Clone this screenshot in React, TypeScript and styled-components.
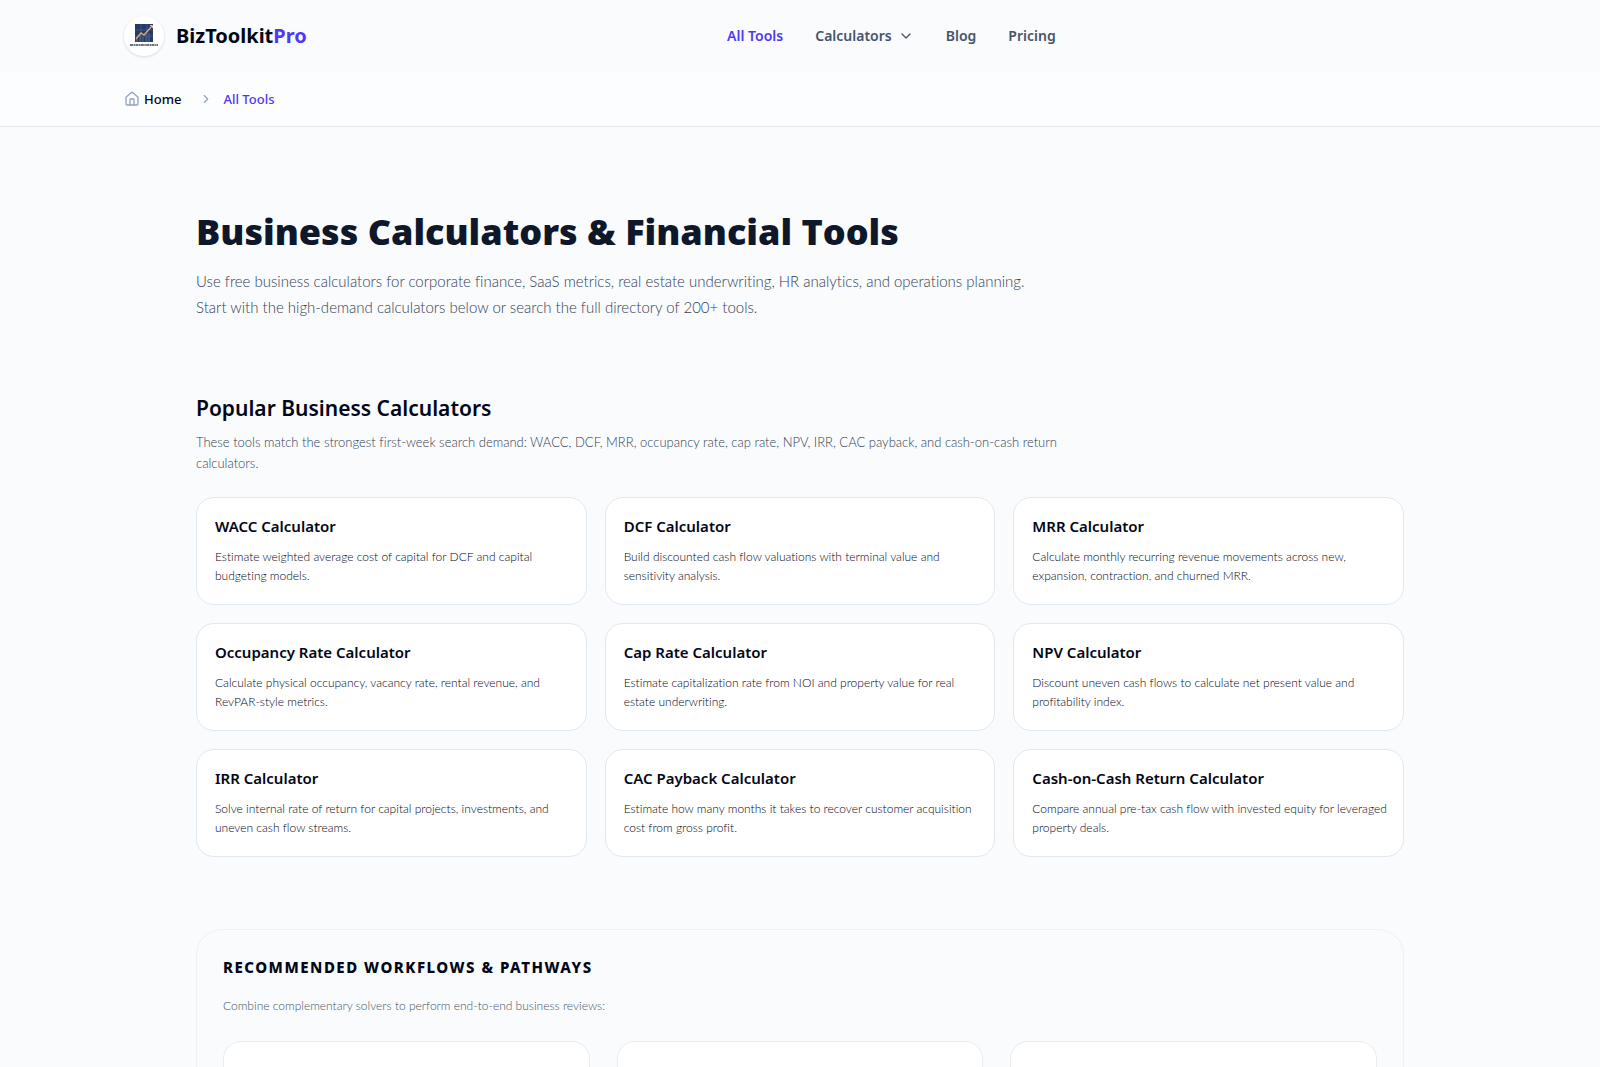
import React from "react";
import styled, { createGlobalStyle } from "styled-components";
import { ChevronDown, ChevronRight, House } from "lucide-react";

const heading = '"Noto Sans", "Open Sans", sans-serif';
const display = '"Open Sans", "Noto Sans", sans-serif';
const copy = 'Lato, "Open Sans", sans-serif';

const color = {
  page: "#f9fbfd",
  ink: "#0f172a",
  title: "#020617",
  text: "#334155",
  muted: "#475569",
  icon: "#94a3b8",
  line: "#e2e8f0",
  brand: "#4f39f6",
};

const GlobalStyle = createGlobalStyle`
  *, *::before, *::after { box-sizing: border-box; }
  body {
    margin: 0;
    background: ${color.page};
    color: ${color.ink};
    font-family: ${heading};
  }
  h1, h2, h3, p, ol { margin: 0; padding: 0; }
  a { color: inherit; text-decoration: none; }
`;

const Shell = styled.div`
  width: 100%;
  max-width: 1400px;
  margin: 0 auto;
  padding: 0 24px;
  display: flex;
  align-items: center;
`;

const Header = styled.header`
  background: ${color.page};

  ${Shell} {
    min-height: 72px;
  }
`;

const Brand = styled.a`
  display: flex;
  align-items: center;
  gap: 12px;
  font-size: 20px;
  line-height: 28px;
  font-weight: 700;
  color: ${color.title};
`;

const BrandAccent = styled.span`
  color: ${color.brand};
`;

const LogoDisc = styled.span`
  display: grid;
  place-items: center;
  width: 40px;
  height: 40px;
  border-radius: 50%;
  background: #fff;
  box-shadow: 0 1px 3px rgba(15, 23, 42, 0.14);
`;

const Nav = styled.nav`
  margin: 0 auto;
  display: flex;
  align-items: center;
  gap: 32px;
`;

const NavLink = styled.a<{ $active?: boolean }>`
  font-size: 14px;
  line-height: 20px;
  font-weight: 600;
  color: ${(p) => (p.$active ? color.brand : color.muted)};
`;

const NavButton = styled.button`
  display: flex;
  align-items: center;
  gap: 6px;
  padding: 0;
  border: 0;
  background: none;
  font: 600 14px/20px ${heading};
  color: ${color.muted};
  cursor: pointer;
`;

const CrumbBar = styled.nav`
  background: #fcfdfe;
  border-bottom: 1px solid ${color.line};

  ${Shell} {
    min-height: 54px;
  }
`;

const Crumbs = styled.ol`
  display: flex;
  align-items: center;
  gap: 12px;
  list-style: none;
  font-size: 13px;
  line-height: 20px;
  font-weight: 500;
`;

const Crumb = styled.li<{ $current?: boolean }>`
  display: flex;
  align-items: center;
  gap: 10px;
  color: ${(p) => (p.$current ? color.brand : color.title)};

  svg {
    color: ${color.icon};
  }
`;

const CrumbLink = styled.a`
  display: flex;
  align-items: center;
  gap: 4px;
  padding-right: 6px;
`;

const Main = styled.main`
  max-width: 1256px;
  margin: 0 auto;
  padding: 83px 24px 72px;
  display: flex;
  flex-direction: column;
  gap: 72px;
`;

const PageTitle = styled.h1`
  font: 800 36px/44px ${display};
  color: ${color.ink};
`;

const Lead = styled.p`
  max-width: 848px;
  margin: 14px 0 2px;
  font: 300 15px/26px ${copy};
  font-variant-ligatures: none;
  color: ${color.text};
`;

const SectionTitle = styled.h2`
  font-size: 21px;
  line-height: 28px;
  font-weight: 600;
  color: ${color.title};
`;

const SectionText = styled.p`
  max-width: 872px;
  margin-top: 10px;
  font: 300 13px/21px ${copy};
  font-variant-ligatures: none;
  color: ${color.text};
`;

const Grid = styled.div<{ $gap: number; $top: number }>`
  display: grid;
  grid-template-columns: repeat(3, minmax(0, 1fr));
  gap: ${(p) => p.$gap}px;
  margin-top: ${(p) => p.$top}px;
`;

const Card = styled.a`
  display: block;
  padding: 18px 12px 18px 18px;
  border: 1px solid ${color.line};
  border-radius: 18px;
  background: #fff;
`;

const CardTitle = styled.h3`
  font-size: 15px;
  line-height: 21px;
  font-weight: 600;
  color: ${color.title};
`;

const CardText = styled.p`
  margin: 10px 0 1px;
  font: 300 12px/19px ${copy};
  font-variant-ligatures: none;
  color: ${color.title};
`;

const Panel = styled.section`
  padding: 26px;
  border: 1px solid #edf1f6;
  border-radius: 26px;
`;

const PanelTitle = styled.h2`
  font-size: 15px;
  line-height: 22px;
  font-weight: 800;
  letter-spacing: 0.1em;
  text-transform: uppercase;
  color: ${color.title};
`;

const PanelText = styled.p`
  margin-top: 18px;
  font: 300 12px/20px ${copy};
  font-variant-ligatures: none;
  color: ${color.muted};
`;

const Pathway = styled.article`
  min-height: 200px;
  border: 1px solid #e9edf0;
  border-radius: 18px;
  background: #fff;
`;

const calculators = [
  ["WACC Calculator", "Estimate weighted average cost of capital for DCF and capital budgeting models."],
  ["DCF Calculator", "Build discounted cash flow valuations with terminal value and sensitivity analysis."],
  ["MRR Calculator", "Calculate monthly recurring revenue movements across new, expansion, contraction, and churned MRR."],
  ["Occupancy Rate Calculator", "Calculate physical occupancy, vacancy rate, rental revenue, and RevPAR-style metrics."],
  ["Cap Rate Calculator", "Estimate capitalization rate from NOI and property value for real estate underwriting."],
  ["NPV Calculator", "Discount uneven cash flows to calculate net present value and profitability index."],
  ["IRR Calculator", "Solve internal rate of return for capital projects, investments, and uneven cash flow streams."],
  ["CAC Payback Calculator", "Estimate how many months it takes to recover customer acquisition cost from gross profit."],
  ["Cash-on-Cash Return Calculator", "Compare annual pre-tax cash flow with invested equity for leveraged property deals."],
];

const pathways = ["valuation", "growth", "property"];

function Logo() {
  return (
    <LogoDisc>
      <svg width="30" height="26" viewBox="0 0 30 26" aria-hidden="true">
        <rect x="6" y="1" width="18" height="18" fill="#263a63" />
        <path d="M6 7h18M6 13h18M12 1v18M18 1v18" stroke="#4a628e" strokeWidth="0.7" />
        <path d="M8 19v-4M11 19v-6M14 19v-5M17 19v-8M20 19v-9" stroke="#4b6690" strokeWidth="1.2" />
        <path d="M7 16l5-6 3 2 8-9" fill="none" stroke="#dda874" strokeWidth="1.4" />
        <path d="M21 2.5h2.5v2.5" fill="none" stroke="#e8c19a" strokeWidth="1" />
        <path d="M1 22h28" stroke="#39435a" strokeWidth="1.4" strokeDasharray="3 0.5 1.5 0.4" />
      </svg>
    </LogoDisc>
  );
}

export default function App() {
  return (
    <>
      <GlobalStyle />
      <Header>
        <Shell>
          <Brand href="#home">
            <Logo />
            <span>
              BizToolkit<BrandAccent>Pro</BrandAccent>
            </span>
          </Brand>
          <Nav aria-label="Main">
            <NavLink href="#tools" $active aria-current="page">All Tools</NavLink>
            <NavButton type="button" aria-haspopup="true">
              Calculators
              <ChevronDown size={16} aria-hidden="true" />
            </NavButton>
            <NavLink href="#blog">Blog</NavLink>
            <NavLink href="#pricing">Pricing</NavLink>
          </Nav>
        </Shell>
      </Header>

      <CrumbBar aria-label="Breadcrumb">
        <Shell>
          <Crumbs>
            <Crumb>
              <CrumbLink href="#home">
                <House size={16} strokeWidth={2} aria-hidden="true" />
                Home
              </CrumbLink>
            </Crumb>
            <Crumb $current aria-current="page">
              <ChevronRight size={14} aria-hidden="true" />
              All Tools
            </Crumb>
          </Crumbs>
        </Shell>
      </CrumbBar>

      <Main>
        <section>
          <PageTitle>Business Calculators &amp; Financial Tools</PageTitle>
          <Lead>
            Use free business calculators for corporate finance, SaaS metrics, real estate
            underwriting, HR analytics, and operations planning. Start with the high-demand
            calculators below or search the full directory of 200+ tools.
          </Lead>
        </section>

        <section>
          <SectionTitle>Popular Business Calculators</SectionTitle>
          <SectionText>
            These tools match the strongest first-week search demand: WACC, DCF, MRR, occupancy
            rate, cap rate, NPV, IRR, CAC payback, and cash-on-cash return calculators.
          </SectionText>
          <Grid $gap={18} $top={23}>
            {calculators.map(([title, text]) => (
              <Card key={title} href="#calculator">
                <CardTitle>{title}</CardTitle>
                <CardText>{text}</CardText>
              </Card>
            ))}
          </Grid>
        </section>

        <Panel>
          <PanelTitle>Recommended Workflows &amp; Pathways</PanelTitle>
          <PanelText>
            Combine complementary solvers to perform end-to-end business reviews:
          </PanelText>
          <Grid $gap={27} $top={25}>
            {pathways.map((name) => (
              <Pathway key={name} />
            ))}
          </Grid>
        </Panel>
      </Main>
    </>
  );
}
